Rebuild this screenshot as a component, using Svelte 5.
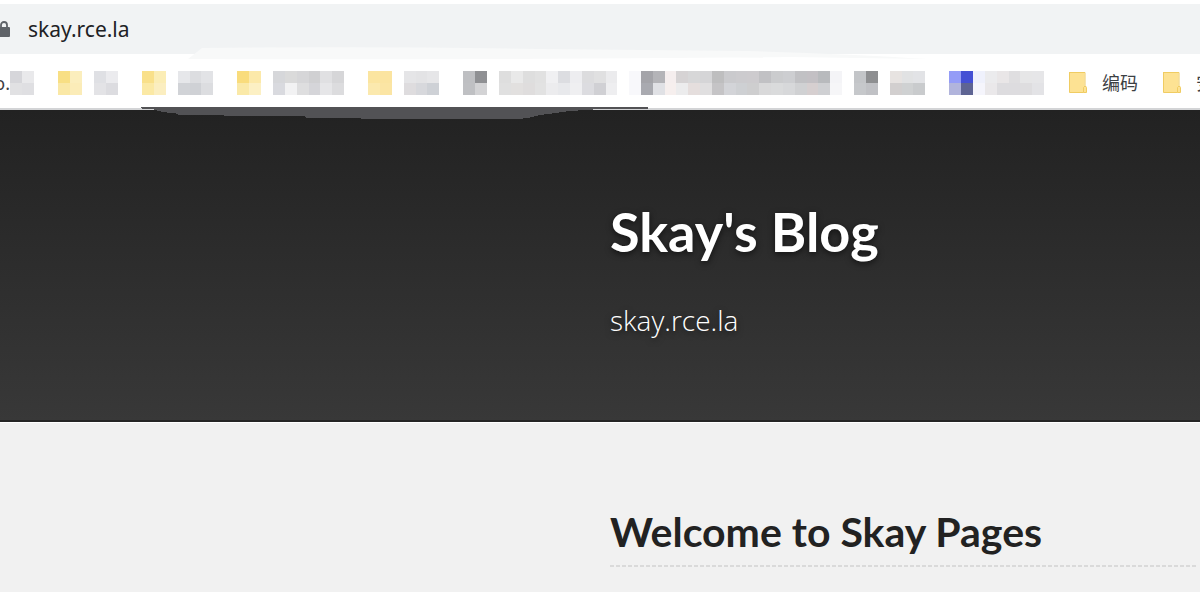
<script lang="ts">
  type Cells = (string | null)[][];

  interface Bookmark {
    id: string;
    folder?: boolean;
    label?: string;
    clipped?: boolean;
    icon?: Cells;
    text?: Cells;
    spacing?: "none" | "half";
    joined?: boolean;
  }

  const CELL = 11.85;

  // each mosaic is two rows of colour cells, null leaves a cell empty
  const bookmarks: Bookmark[] = [
    {
      id: "apps",
      label: "o.",
      clipped: true,
      joined: true,
      text: [["#d6d6da", "#e9e9eb"], ["#e1e1e3", "#dfdfe2"]],
    },
    {
      id: "b1",
      icon: [["#f8df84", "#fbeebd"], ["#fae8a6", "#fbecb8"]],
      text: [["#dfe0e4", "#ebebee"], ["#e3e3e6", "#dcdce0"]],
    },
    {
      id: "b2",
      icon: [["#f9e08a", "#fbedb5"], ["#fbe9a5", "#fbeec0"]],
      text: [["#e6e7ea", "#dcdde0", "#e2e3e6"], ["#d1d3d7", "#cfd1d5", "#dcdde0"]],
    },
    {
      id: "b3",
      icon: [["#f9dc7c", "#fce9a9"], ["#fae9a8", "#fcf0c4"]],
      text: [
        ["#d6d7da", "#dadada", "#d6d6d8", "#d0d0d2", "#e0e0e2", "#d6d6d8"],
        ["#d9dadf", "#f2f2f3", "#dededf", "#d5d5d9", "#e6e6e8", "#dcdcde"],
      ],
    },
    {
      id: "b4",
      icon: [["#fbe5a0", "#fbe4a0"], ["#fbe9ae", "#fbe5a4"]],
      text: [["#e5e5e7", "#e3e3e5", "#e6e6e8"], ["#dedcde", "#d7d8dc", "#ced1d6"]],
    },
    {
      id: "b5",
      icon: [["#bebfc2", "#8f9093"], ["#bfc0c3", "#d3d3d5"]],
      text: [
        ["#dedede", "#e9e9e9", "#dedede", "#e1e1e1", "#f0f0f2", "#dcdde1", "#ededf0", "#dcdcde", "#e0e0e1", "#ebebed", null, "#f8f8fb"],
        ["#e0e0e0", "#e2e0df", "#dfdddd", "#e2e2e2", "#ececee", "#e8e9ec", "#efeff1", "#dcdce0", "#d0d0d4", "#eeeef0", null, "#f8f8fb"],
      ],
      spacing: "none",
    },
    {
      id: "b6",
      text: [
        ["#a4a4a9", "#b4b4b8", "#f5eeee", "#d6d3d4", "#d7d7d8", "#d5d5d7", "#bebebf", "#cacacd", "#cccbce", "#cdcbce", "#c1c1c4", "#cbccce", "#cdced1", "#c1c1c4", "#c3c0c4", "#b8babd", "#f4f4f7"],
        ["#a9aab0", "#e0e1e5", "#f6efee", "#ececed", "#e5dedd", "#e0dfe0", "#c5c4c6", "#d3d4d8", "#ced0d3", "#cececf", "#d9d9da", "#dadbdc", "#d7d8da", "#d0d1d3", "#d6cfd0", "#cfd0d3", "#f6f6f8"],
      ],
      spacing: "half",
    },
    {
      id: "b7",
      icon: [["#c3c5c8", "#8e8f91"], ["#c6c8cb", "#c0c1c5"]],
      text: [["#e7e3e1", "#e1e2e3", "#e2e3e6"], ["#d2cfcf", "#cfd1d2", "#c9cbcd"]],
    },
    {
      id: "b8",
      icon: [["#949cf7", "#4450d4"], ["#b1b4dc", "#5e6493"]],
      text: [
        ["#eff1fc", "#ebebed", "#e9e6e7", "#dfdee0", "#e6e6e7", "#e6e6e8"],
        ["#f5f5fc", "#eae8ea", "#dddcdf", "#dddcdf", "#dedddf", "#e3e3e6"],
      ],
      joined: true,
    },
    { id: "b9", folder: true, label: "编码" },
    { id: "b10", folder: true, label: "安全" },
  ];

  let address = $state("skay.rce.la");
</script>

{#snippet mosaic(rows: Cells)}
  <svg
    class="mosaic"
    style="width:{Math.floor(rows[0].length * CELL + 0.4)}px"
    viewBox="0 0 {rows[0].length} 2"
    preserveAspectRatio="none"
    shape-rendering="crispEdges"
    aria-hidden="true"
  >
    {#each rows as row, y}
      {#each row as fill, x}
        {#if fill}
          <rect {x} {y} width="1" height="1" {fill} />
        {/if}
      {/each}
    {/each}
  </svg>
{/snippet}

<div class="browser">
  <div class="toolbar">
    <svg class="lock" viewBox="0 0 12 18" aria-hidden="true">
      <path d="M3 8V5a3 3 0 0 1 6 0v3" fill="none" stroke="#5f6368" stroke-width="1.8" />
      <rect x="0" y="7" width="12" height="10" rx="1" fill="#5f6368" />
    </svg>
    <input class="address" type="text" aria-label="Address" spellcheck="false" bind:value={address} />
  </div>

  <nav class="bookmarks" aria-label="Bookmarks">
    {#each bookmarks as b (b.id)}
      <a
        href="#{b.id}"
        class="bookmark {b.spacing ?? ''}"
        class:joined={b.joined}
        class:named={b.folder}
        aria-label={b.label ?? "Bookmark"}
      >
        {#if b.folder}
          <svg class="folder" viewBox="0 0 20 24" aria-hidden="true">
            <path d="M1.500 1H16.500V15H18.500V21.500H1.500Z" fill="#fde293" />
            <path d="M1.500 1V21.500H15.500V16.500L17 15L18.500 16.500V21.500H15.500M17 15V1.500H1.500" fill="none" stroke="#f0cc62" />
          </svg>
        {/if}
        {#if b.icon}{@render mosaic(b.icon)}{/if}
        {#if b.label}<span class="label" class:clipped={b.clipped}>{b.label}</span>{/if}
        {#if b.text}{@render mosaic(b.text)}{/if}
      </a>
    {/each}
  </nav>

  <svg class="wash" viewBox="0 0 750 14" aria-hidden="true">
    <path d="M0 12L14 1Q180 -1 350 2L560 4Q660 7 740 12L600 10Q300 13 0 12Z" fill="#f8f9f9" />
  </svg>
</div>

<header>
  <svg class="stroke" viewBox="0 0 508 13" shape-rendering="crispEdges" aria-hidden="true">
    <path d="M0 0H508V2H460L430 4L408 7L400 8L388 11L378 12H222L220 11H166L164 9H85L82 8H39L35 6H30L18 4L12 2H2Z" fill="#525255" />
  </svg>
  <h1>Skay's Blog</h1>
  <p>skay.rce.la</p>
</header>

<main>
  <h2>Welcome to Skay Pages</h2>
</main>

<style>
  :global(body) {
    margin: 0;
    background: #f1f1f1;
    overflow: hidden;
  }
  .browser {
    position: relative;
    background: #fff;
    padding-top: 4px;
    border-bottom: 2px solid #d3d4d6;
    font-family: "Noto Sans", "Noto Sans CJK SC", sans-serif;
  }
  .toolbar {
    display: flex;
    align-items: center;
    height: 50px;
    gap: 18px;
    background: #f1f3f4;
  }
  .lock {
    flex: none;
    width: 12px;
    height: 18px;
    margin-left: -2px;
  }
  .address {
    flex: 1;
    min-width: 0;
    padding: 0;
    border: none;
    outline: none;
    background: transparent;
    font: inherit;
    font-size: 21px;
    line-height: 28px;
    color: #202124;
  }
  .bookmarks {
    display: flex;
    align-items: center;
    height: 50px;
    padding-top: 4px;
    overflow: hidden;
    white-space: nowrap;
  }
  .bookmark {
    flex: none;
    display: flex;
    align-items: center;
    gap: 12px;
    margin-right: 24px;
    font-size: 18px;
    line-height: 24px;
    color: #3c4043;
    text-decoration: none;
  }
  .bookmark.joined { gap: 0; }
  .bookmark.named { gap: 14px; }
  .bookmark.none { margin-right: 0; }
  .bookmark.half { margin-right: 12px; }
  .label.clipped {
    display: flex;
    justify-content: flex-end;
    width: 10px;
    overflow: hidden;
  }
  .mosaic {
    flex: none;
    display: block;
    height: 24px;
  }
  .folder {
    flex: none;
    width: 20px;
    height: 24px;
  }
  .wash {
    position: absolute;
    top: 47px;
    left: 188px;
    width: 750px;
    height: 14px;
  }

  header {
    position: relative;
    padding: 84px 0 78px calc(50% + 10px);
    background: linear-gradient(#222, #383838);
    border-bottom: 2px solid #252525;
    box-shadow: 0 1px 0 #fff;
    color: #fff;
    text-shadow: 0 2px 6px rgba(0, 0, 0, 0.6);
  }
  .stroke {
    position: absolute;
    top: -3px;
    left: 140px;
    width: 508px;
    height: 13px;
  }
  h1 {
    margin: 0;
    font-family: Lato, sans-serif;
    font-size: 54px;
    font-weight: 700;
    line-height: 76px;
  }
  header p {
    margin: 28px 0 0;
    font-family: "Open Sans", sans-serif;
    font-size: 28px;
    font-weight: 300;
    line-height: 44px;
  }

  main {
    padding: 82px 3px 24px calc(50% + 10px);
  }
  h2 {
    margin: 0;
    padding-bottom: 7px;
    background: repeating-linear-gradient(90deg, #dadada 0 4px, transparent 4px 6px) left bottom / 100% 2px no-repeat;
    font-family: Lato, sans-serif;
    font-size: 41px;
    font-weight: 700;
    line-height: 56px;
    color: #222;
  }
</style>
